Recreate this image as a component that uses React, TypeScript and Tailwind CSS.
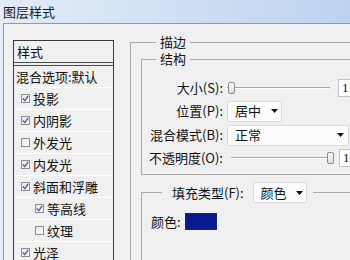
import type { ReactNode } from "react";

const font = { fontFamily: '"Noto Sans CJK SC", "Noto Sans", sans-serif' };

const effects = [
  { label: "投影", checked: true, sub: false },
  { label: "内阴影", checked: true, sub: false },
  { label: "外发光", checked: false, sub: false },
  { label: "内发光", checked: true, sub: false },
  { label: "斜面和浮雕", checked: true, sub: false },
  { label: "等高线", checked: true, sub: true },
  { label: "纹理", checked: false, sub: true },
  { label: "光泽", checked: true, sub: false },
];

function Check({ checked }: { checked: boolean }) {
  return (
    <span className="flex h-[9px] w-[9px] shrink-0 items-center justify-center border border-[#8e8f8f] bg-linear-to-br from-[#e6e6e6] to-[#fbfbfb]">
      {checked && (
        <svg width="7" height="7" viewBox="0 0 7 7">
          <path d="M0.8 3.4 L2.8 5.6 L6.2 0.9" stroke="#46639c" strokeWidth="1.4" fill="none" />
        </svg>
      )}
    </span>
  );
}

function Arrow() {
  return (
    <svg width="7" height="4" viewBox="0 0 7 4">
      <path d="M0 0 H7 L3.5 4 Z" fill="#111" />
    </svg>
  );
}

function Dropdown({ value, className }: { value: string; className: string }) {
  return (
    <div
      className={`flex h-[21px] items-center justify-between rounded-[2px] border border-[#dcdcdc] bg-[#fcfcfc] pl-[7px] pr-[3px] ${className}`}
    >
      <span>{value}</span>
      <Arrow />
    </div>
  );
}

function Slider({ width, pos }: { width: number; pos: "start" | "end" }) {
  return (
    <div className="relative flex h-[12px] items-center" style={{ width }}>
      <div className="h-[2px] w-full border-t border-[#a7a7a7] border-b border-b-white" />
      <div
        className={`absolute top-0 h-[12px] w-[7px] rounded-[2px] border border-[#8c8c8c] bg-linear-to-b from-[#fdfdfd] to-[#dcdcdc] ${
          pos === "start" ? "left-[1px]" : "right-0"
        }`}
      />
    </div>
  );
}

function NumBox({ value }: { value: string }) {
  return (
    <div
      className="flex h-[18px] w-[24px] items-center border border-[#c3c3c3] bg-white pl-[3px] text-[13px]"
      style={{ fontFamily: '"Liberation Serif", serif' }}
    >
      {value}
    </div>
  );
}

function Row({ label, h, children }: { label: string; h: string; children: ReactNode }) {
  return (
    <div className={`flex items-center ${h}`}>
      <span className="w-[81px] shrink-0 text-right">{label}</span>
      <div className="ml-[4px] flex items-center">{children}</div>
    </div>
  );
}

export default function App() {
  return (
    <div
      className="h-[260px] w-[350px] overflow-hidden bg-linear-to-r from-[#e3ecf7] to-[#bcd3ef] text-[13px] text-[#111]"
      style={font}
    >
      <div className="flex h-[23px] items-center pl-[3px] text-[13px] text-[#1a1a1a]">图层样式</div>

      <div className="ml-[3px] flex h-[237px] border-l border-t border-[#8f9aa7] bg-[#f0f0f0]">
        {/* effect list */}
        <div className="ml-[9px] mt-[16px] h-[240px] w-[101px] shrink-0 border border-[#3a3a3a]">
          <div className="flex h-[22px] items-center border-b border-[#4a4a4a] pl-[3px]">样式</div>
          <div className="mt-[2px] border-t border-[#4a4a4a]" />
          <div className="flex h-[22px] items-center border-b border-white pl-[2px] leading-none">
            混合选项:默认
          </div>
          {effects.map((e) => (
            <div
              key={e.label}
              className={`flex h-[22px] items-center gap-[3px] border-b border-white ${
                e.sub ? "pl-[21px]" : "pl-[7px]"
              }`}
            >
              <Check checked={e.checked} />
              <span>{e.label}</span>
            </div>
          ))}
        </div>

        {/* stroke settings */}
        <fieldset className="ml-[16px] mt-[10px] h-[260px] w-[240px] shrink-0 border border-[#a9a9a9] pl-[10px]">
          <legend className="ml-[15px] px-[4px] leading-[16px]">描边</legend>

          <fieldset className="mt-[1px] border border-[#a9a9a9] pb-[5px]">
            <legend className="ml-[14px] px-[4px] leading-[16px]">结构</legend>
            <div className="mt-[10px]">
              <Row label="大小(S):" h="h-[22px]">
                <Slider width={103} pos="start" />
                <div className="ml-[8px]">
                  <NumBox value="1" />
                </div>
              </Row>
              <Row label="位置(P):" h="h-[24px]">
                <Dropdown value="居中" className="w-[55px]" />
              </Row>
              <Row label="混合模式(B):" h="h-[24px]">
                <Dropdown value="正常" className="w-[122px] pr-[4px]" />
              </Row>
              <Row label="不透明度(O):" h="h-[22px]">
                <div className="ml-[4px]">
                  <Slider width={103} pos="end" />
                </div>
                <div className="ml-[5px]">
                  <NumBox value="10" />
                </div>
              </Row>
            </div>
          </fieldset>

          <fieldset className="mt-[7px] h-[120px] border border-[#a9a9a9] pl-[9px]">
            <legend className="ml-[11px] flex items-center pl-[10px] pr-[6px]">
              <span>填充类型(F):</span>
              <Dropdown value="颜色" className="ml-[9px] w-[54px]" />
            </legend>
            <div className="mt-[9px] flex items-center">
              <span>颜色:</span>
              <div className="ml-[4px] h-[17px] w-[32px] border border-[#1c2570] bg-[#0a1a8e]" />
            </div>
          </fieldset>
        </fieldset>
      </div>
    </div>
  );
}
